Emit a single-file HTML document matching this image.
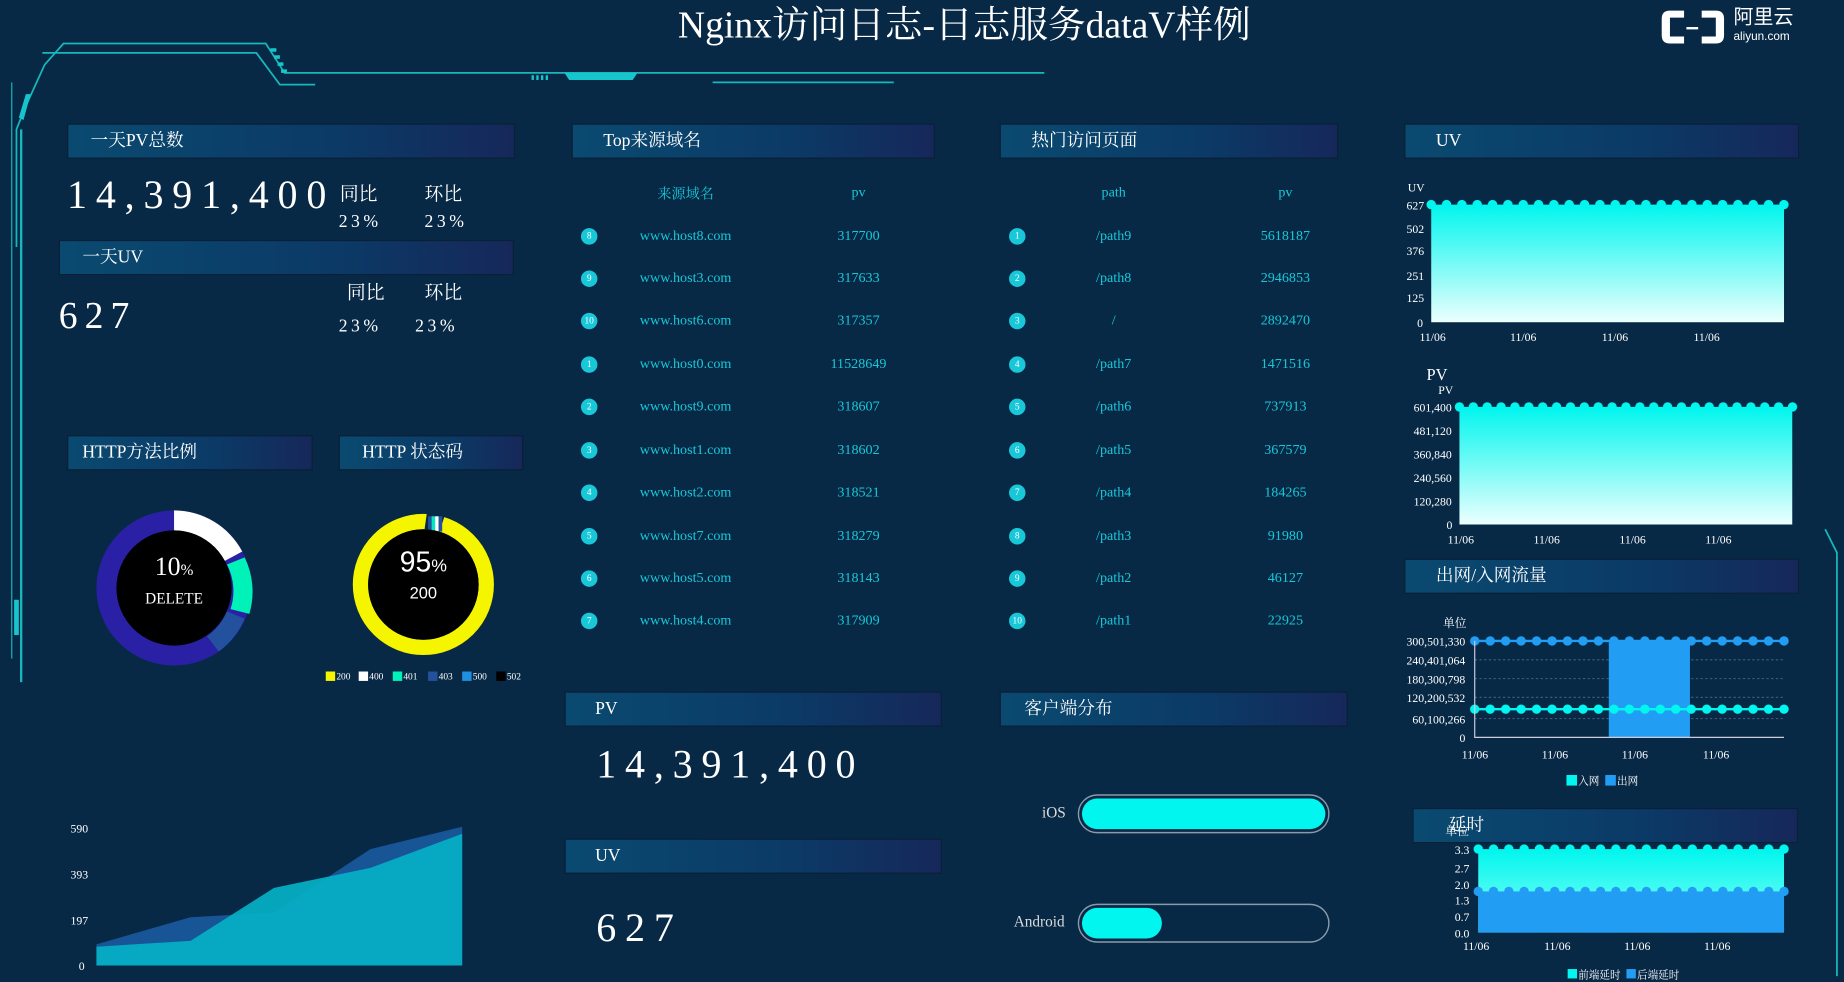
<!DOCTYPE html>
<html><head><meta charset="utf-8"><style>
html,body{margin:0;padding:0;background:#072946;overflow:hidden}
#w{width:1844px;height:982px;overflow:hidden;position:relative;background:#072946}
#s{position:absolute;left:0;top:0;width:1568px;height:835px;transform:scale(1.17602);transform-origin:0 0;font-family:"Liberation Serif","Noto Serif CJK SC",serif;color:#fff}
.a{position:absolute;white-space:nowrap}
.h{position:absolute;height:30px;background:linear-gradient(90deg,#0a4a70,#0b3a66 60%,#16285a);border:1px solid #0a2038;box-sizing:border-box;font-size:15px;line-height:28px;color:#fff}
.big{font-size:34px;letter-spacing:7.5px}
.t{color:#19c8d8;font-size:12px;text-align:center;width:120px;margin-left:-60px}
.c{position:absolute;width:14px;height:14px;border-radius:50%;background:#19c8d8;color:#fff;font-size:8px;text-align:center;line-height:14px}
</style></head><body><div id="w"><div id="s">
<svg width="1568" height="835" style="position:absolute;left:0;top:0">
<g stroke="#17b7bb" fill="none" stroke-width="1.5">
<path d="M14,210 L14,110 L22,90 L38,55 L54,37 L226,37 L242,62 L888,62"/>
<path d="M36,45 L218,45 L238,72 L268,72"/>
<path d="M10,70 L10,560" stroke-width="1"/>
<path d="M18,110 L18,580" stroke-width="2"/>
<path d="M606,70 L760,70"/>
<path d="M1552,450 L1562,470 L1562,830"/>
</g>
<path d="M16,100 L22,80 L26,80 L20,102 Z" fill="#17c6cc"/>
<path d="M480,62 L542,62 L538,68 L484,68 Z" fill="#17c6cc"/>
<g fill="#17c6cc"><rect x="230" y="41" width="5" height="3"/><rect x="233" y="47" width="5" height="3"/><rect x="236" y="53" width="5" height="3"/><rect x="239" y="59" width="5" height="3"/>
<rect x="452" y="64" width="2" height="4"/><rect x="456" y="64" width="2" height="4"/><rect x="460" y="64" width="2" height="4"/><rect x="464" y="64" width="2" height="4"/></g>
<rect x="12" y="510" width="4" height="30" fill="#17c6cc"/>
<g transform="translate(148,500)">
<circle r="57" fill="none" stroke="#2a20a6" stroke-width="18"/>
<path d="M0,-66 A66,66 0 0 1 58,-31 L43,-23 A49,49 0 0 0 0,-49Z" fill="#fff"/>
<path d="M60,-26 A66,66 0 0 1 64,22 L48,18 A49,49 0 0 0 45,-20Z" fill="#00f2b8"/>
<path d="M60,26 A66,66 0 0 1 38,54 L28,41 A49,49 0 0 0 45,20Z" fill="#23519e"/>
<circle r="49" fill="#000"/>
</g>
<g transform="translate(360,497)">
<circle r="53.5" fill="none" stroke="#f5f500" stroke-width="13"/>
<path d="M3,-61 L18,-58 L14,-46 L1,-47Z" fill="#072946"/>
<rect x="4" y="-58" width="3" height="13" fill="#23519e"/><rect x="7" y="-58" width="3" height="13" fill="#00e8c0"/><rect x="10" y="-58" width="3" height="13" fill="#fff"/><rect x="13" y="-58" width="3" height="13" fill="#23519e"/>
<circle r="47" fill="#000"/>
</g>
<g font-size="8" fill="#fff" font-family="Liberation Serif">
<rect x="277" y="571" width="8" height="8" fill="#f5f500"/><text x="286" y="578">200</text>
<rect x="305" y="571" width="8" height="8" fill="#fff"/><text x="314" y="578">400</text>
<rect x="334" y="571" width="8" height="8" fill="#00f2b8"/><text x="343" y="578">401</text>
<rect x="364" y="571" width="8" height="8" fill="#23519e"/><text x="373" y="578">403</text>
<rect x="393" y="571" width="8" height="8" fill="#1f8fe0"/><text x="402" y="578">500</text>
<rect x="422" y="571" width="8" height="8" fill="#000"/><text x="431" y="578">502</text>
</g>
<path d="M82,803 L162,780 L233,776 L315,722 L393,703 L393,821 L82,821Z" fill="#1b5aa0" opacity=".9"/>
<path d="M82,805 L162,800 L233,755 L315,738 L393,709 L393,821 L82,821Z" fill="#05b2c8" opacity=".9"/>
<g font-size="10" fill="#fff"><text x="60" y="708">590</text><text x="60" y="747">393</text><text x="60" y="786">197</text><text x="67" y="825">0</text></g>
<defs>
<linearGradient id="g1" x1="0" y1="0" x2="0" y2="1"><stop offset="0" stop-color="#00f6ee"/><stop offset="1" stop-color="#ecfffe"/></linearGradient>
<linearGradient id="g2" x1="0" y1="0" x2="0" y2="1"><stop offset="0" stop-color="#00f6ee"/><stop offset="1" stop-color="#8cfff6"/></linearGradient>
<pattern id="pc" x="1217" y="0" width="13.04" height="835" patternUnits="userSpaceOnUse"><circle cx="0" cy="174" r="4" fill="#00f6ee"/><circle cx="13.04" cy="174" r="4" fill="#00f6ee"/></pattern>
<pattern id="pc2" x="1241" y="0" width="11.8" height="835" patternUnits="userSpaceOnUse"><circle cx="0" cy="346" r="4" fill="#00f6ee"/><circle cx="11.8" cy="346" r="4" fill="#00f6ee"/></pattern>
<pattern id="pb" x="1254" y="0" width="13.15" height="835" patternUnits="userSpaceOnUse"><circle cx="0" cy="545" r="4" fill="#219ef4"/><circle cx="13.15" cy="545" r="4" fill="#219ef4"/><circle cx="0" cy="603" r="4" fill="#00f6ee"/><circle cx="13.15" cy="603" r="4" fill="#00f6ee"/></pattern>
<pattern id="pd" x="1257" y="0" width="13" height="835" patternUnits="userSpaceOnUse"><circle cx="0" cy="722" r="4" fill="#00f6ee"/><circle cx="13" cy="722" r="4" fill="#00f6ee"/><circle cx="0" cy="758" r="4" fill="#219ef4"/><circle cx="13" cy="758" r="4" fill="#219ef4"/></pattern>
</defs>
<rect x="1217" y="174" width="300" height="100" fill="url(#g1)"/>
<rect x="1212" y="168" width="310" height="12" fill="url(#pc)"/>
<g font-size="10" fill="#fff"><text x="1197" y="163">UV</text><text x="1196" y="178">627</text><text x="1196" y="198">502</text><text x="1196" y="217">376</text><text x="1196" y="238">251</text><text x="1196" y="257">125</text><text x="1205" y="278">0</text>
<text x="1207" y="290">11/06</text><text x="1284" y="290">11/06</text><text x="1362" y="290">11/06</text><text x="1440" y="290">11/06</text></g>
<rect x="1241" y="346" width="283" height="100" fill="url(#g1)"/>
<rect x="1236" y="340" width="293" height="12" fill="url(#pc2)"/>
<g font-size="10" fill="#fff"><text x="1223" y="335">PV</text><text x="1202" y="350">601,400</text><text x="1202" y="370">481,120</text><text x="1202" y="390">360,840</text><text x="1202" y="410">240,560</text><text x="1202" y="430">120,280</text><text x="1230" y="450">0</text>
<text x="1231" y="462">11/06</text><text x="1304" y="462">11/06</text><text x="1377" y="462">11/06</text><text x="1450" y="462">11/06</text></g>
<text x="1213" y="323" font-size="14" fill="#fff">PV</text>
<g stroke="#3c5874" stroke-dasharray="2,2" stroke-width="1"><line x1="1254" y1="561" x2="1517" y2="561"/><line x1="1254" y1="577" x2="1517" y2="577"/><line x1="1254" y1="593" x2="1517" y2="593"/><line x1="1254" y1="611" x2="1517" y2="611"/></g>
<rect x="1368" y="545" width="69" height="82" fill="#219ef4"/>
<line x1="1254" y1="545" x2="1517" y2="545" stroke="#219ef4" stroke-width="2"/>
<line x1="1254" y1="603" x2="1517" y2="603" stroke="#00f6ee" stroke-width="2"/>
<rect x="1249" y="539" width="273" height="70" fill="url(#pb)"/>
<path d="M1254,545 L1254,627 L1517,627" stroke="#ccd" fill="none"/>
<g font-size="10" fill="#fff"><text x="1227" y="533">单位</text><text x="1196" y="549">300,501,330</text><text x="1196" y="565">240,401,064</text><text x="1196" y="581">180,300,798</text><text x="1196" y="597">120,200,532</text><text x="1201" y="615">60,100,266</text><text x="1241" y="631">0</text>
<text x="1243" y="645">11/06</text><text x="1311" y="645">11/06</text><text x="1379" y="645">11/06</text><text x="1448" y="645">11/06</text>
<rect x="1332" y="659" width="9" height="9" fill="#00f6ee"/><text x="1342" y="667" font-size="9">入网</text><rect x="1365" y="659" width="9" height="9" fill="#219ef4"/><text x="1375" y="667" font-size="9">出网</text></g>
<rect x="1257" y="722" width="260" height="71" fill="url(#g2)"/>
<rect x="1257" y="758" width="260" height="35" fill="#219ef4"/>
<rect x="1252" y="716" width="270" height="48" fill="url(#pd)"/>
<g font-size="10" fill="#fff"><text x="1237" y="726">3.3</text><text x="1237" y="742">2.7</text><text x="1237" y="756">2.0</text><text x="1237" y="769">1.3</text><text x="1237" y="783">0.7</text><text x="1237" y="797">0.0</text>
<text x="1244" y="808">11/06</text><text x="1313" y="808">11/06</text><text x="1381" y="808">11/06</text><text x="1449" y="808">11/06</text>
<rect x="1333" y="824" width="8" height="8" fill="#00f6ee"/><text x="1342" y="832" font-size="9">前端延时</text><rect x="1383" y="824" width="8" height="8" fill="#219ef4"/><text x="1392" y="832" font-size="9">后端延时</text></g>
<rect x="917" y="676" width="213" height="32" rx="16" fill="none" stroke="#8a9aaa" stroke-width="1.2"/>
<rect x="920" y="679" width="207" height="26" rx="13" fill="#00f6ee"/>
<rect x="917" y="769" width="213" height="32" rx="16" fill="none" stroke="#8a9aaa" stroke-width="1.2"/>
<rect x="920" y="772" width="68" height="26" rx="13" fill="#00f6ee"/>
<path d="M1432,9 L1420,9 Q1413,9 1413,16 L1413,30 Q1413,37 1420,37 L1432,37 L1432,31 L1420,31 L1420,15 L1432,15Z" fill="#fff"/>
<path d="M1447,9 L1459,9 Q1466,9 1466,16 L1466,30 Q1466,37 1459,37 L1447,37 L1447,31 L1459,31 L1459,15 L1447,15Z" fill="#fff"/>
<rect x="1434" y="23" width="10" height="2" fill="#fff"/>
</svg>
<div class="a" style="left:0;width:1640px;text-align:center;top:0;font-size:32px;line-height:42px">Nginx访问日志-日志服务dataV样例</div>
<div class="a" style="left:1474px;top:5px;font-size:17px;line-height:20px;font-family:'Liberation Sans','Noto Sans CJK SC',sans-serif">阿里云</div>
<div class="a" style="left:1474px;top:26px;font-size:10px;line-height:12px;font-family:'Liberation Sans',sans-serif">aliyun.com</div>

<div class="h" style="left:57px;top:105px;width:381px;padding-left:19px">一天PV总数</div>
<div class="a big" style="left:57px;top:148px">14,391,400</div>
<div class="a" style="left:289px;top:152px;font-size:16px">同比</div><div class="a" style="left:361px;top:152px;font-size:16px">环比</div>
<div class="a" style="left:288px;top:181px;font-size:15px;letter-spacing:3px">23%</div><div class="a" style="left:361px;top:181px;font-size:15px;letter-spacing:3px">23%</div>
<div class="h" style="left:50px;top:204px;width:387px;padding-left:19px">一天UV</div>
<div class="a" style="left:295px;top:236px;font-size:16px">同比</div><div class="a" style="left:361px;top:236px;font-size:16px">环比</div>
<div class="a" style="left:50px;top:250px;font-size:32px;letter-spacing:6px">627</div>
<div class="a" style="left:288px;top:270px;font-size:15px;letter-spacing:3px">23%</div><div class="a" style="left:353px;top:270px;font-size:15px;letter-spacing:3px">23%</div>

<div class="h" style="left:57px;top:370px;width:209px;padding-left:12px">HTTP方法比例</div>
<div class="h" style="left:288px;top:370px;width:157px;padding-left:19px">HTTP 状态码</div>
<div class="a" style="left:98px;top:469px;width:100px;text-align:center;font-size:22px">10<span style="font-size:13px">%</span></div>
<div class="a" style="left:98px;top:501px;width:100px;text-align:center;font-size:13px">DELETE</div>
<div class="a" style="left:310px;top:465px;width:100px;text-align:center;font-size:24px;font-family:'Liberation Sans',sans-serif">95<span style="font-size:15px">%</span></div>
<div class="a" style="left:310px;top:496px;width:100px;text-align:center;font-size:14px;font-family:'Liberation Sans',sans-serif">200</div>

<div class="h" style="left:486px;top:105px;width:309px;padding-left:26px">Top来源域名</div>
<div class="h" style="left:850px;top:105px;width:288px;padding-left:26px">热门访问页面</div>
<div class="a t" style="left:583px;top:156px">来源域名</div><div class="a t" style="left:730px;top:156px">pv</div>
<div class="a t" style="left:947px;top:156px">path</div><div class="a t" style="left:1093px;top:156px">pv</div>

<div class="c" style="left:494px;top:194px">8</div><div class="a t" style="left:583px;top:193px">www.host8.com</div><div class="a t" style="left:730px;top:193px">317700</div>
<div class="c" style="left:494px;top:230px">9</div><div class="a t" style="left:583px;top:229px">www.host3.com</div><div class="a t" style="left:730px;top:229px">317633</div>
<div class="c" style="left:494px;top:266px">10</div><div class="a t" style="left:583px;top:265px">www.host6.com</div><div class="a t" style="left:730px;top:265px">317357</div>
<div class="c" style="left:494px;top:303px">1</div><div class="a t" style="left:583px;top:302px">www.host0.com</div><div class="a t" style="left:730px;top:302px">11528649</div>
<div class="c" style="left:494px;top:339px">2</div><div class="a t" style="left:583px;top:338px">www.host9.com</div><div class="a t" style="left:730px;top:338px">318607</div>
<div class="c" style="left:494px;top:376px">3</div><div class="a t" style="left:583px;top:375px">www.host1.com</div><div class="a t" style="left:730px;top:375px">318602</div>
<div class="c" style="left:494px;top:412px">4</div><div class="a t" style="left:583px;top:411px">www.host2.com</div><div class="a t" style="left:730px;top:411px">318521</div>
<div class="c" style="left:494px;top:449px">5</div><div class="a t" style="left:583px;top:448px">www.host7.com</div><div class="a t" style="left:730px;top:448px">318279</div>
<div class="c" style="left:494px;top:485px">6</div><div class="a t" style="left:583px;top:484px">www.host5.com</div><div class="a t" style="left:730px;top:484px">318143</div>
<div class="c" style="left:494px;top:521px">7</div><div class="a t" style="left:583px;top:520px">www.host4.com</div><div class="a t" style="left:730px;top:520px">317909</div>

<div class="c" style="left:858px;top:194px">1</div><div class="a t" style="left:947px;top:193px">/path9</div><div class="a t" style="left:1093px;top:193px">5618187</div>
<div class="c" style="left:858px;top:230px">2</div><div class="a t" style="left:947px;top:229px">/path8</div><div class="a t" style="left:1093px;top:229px">2946853</div>
<div class="c" style="left:858px;top:266px">3</div><div class="a t" style="left:947px;top:265px">/</div><div class="a t" style="left:1093px;top:265px">2892470</div>
<div class="c" style="left:858px;top:303px">4</div><div class="a t" style="left:947px;top:302px">/path7</div><div class="a t" style="left:1093px;top:302px">1471516</div>
<div class="c" style="left:858px;top:339px">5</div><div class="a t" style="left:947px;top:338px">/path6</div><div class="a t" style="left:1093px;top:338px">737913</div>
<div class="c" style="left:858px;top:376px">6</div><div class="a t" style="left:947px;top:375px">/path5</div><div class="a t" style="left:1093px;top:375px">367579</div>
<div class="c" style="left:858px;top:412px">7</div><div class="a t" style="left:947px;top:411px">/path4</div><div class="a t" style="left:1093px;top:411px">184265</div>
<div class="c" style="left:858px;top:449px">8</div><div class="a t" style="left:947px;top:448px">/path3</div><div class="a t" style="left:1093px;top:448px">91980</div>
<div class="c" style="left:858px;top:485px">9</div><div class="a t" style="left:947px;top:484px">/path2</div><div class="a t" style="left:1093px;top:484px">46127</div>
<div class="c" style="left:858px;top:521px">10</div><div class="a t" style="left:947px;top:520px">/path1</div><div class="a t" style="left:1093px;top:520px">22925</div>

<div class="h" style="left:480px;top:588px;width:321px;padding-left:25px">PV</div>
<div class="a big" style="left:507px;top:632px">14,391,400</div>
<div class="h" style="left:480px;top:713px;width:321px;padding-left:25px">UV</div>
<div class="a big" style="left:507px;top:771px">627</div>
<div class="h" style="left:850px;top:588px;width:296px;padding-left:20px">客户端分布</div>
<div class="a" style="left:886px;top:683px;font-size:13px;color:#ddd">iOS</div>
<div class="a" style="left:862px;top:776px;font-size:13px;color:#ddd">Android</div>

<div class="h" style="left:1194px;top:105px;width:336px;padding-left:26px">UV</div>
<div class="h" style="left:1194px;top:475px;width:336px;padding-left:26px">出网/入网流量</div>
<div class="h" style="left:1201px;top:687px;width:328px;padding-left:30px">延时</div>
<div class="a" style="left:1229px;top:698px;font-size:10px">单位</div>
</div></div></body></html>
